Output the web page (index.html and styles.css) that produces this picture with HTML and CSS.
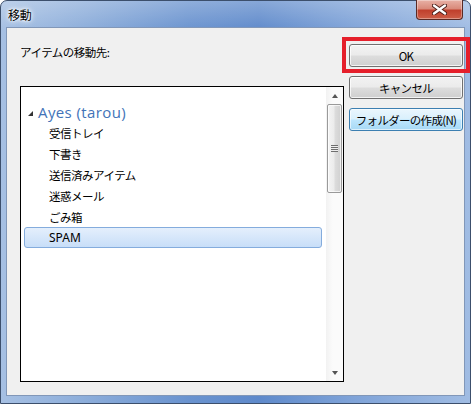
FILE: index.html
```html
<!DOCTYPE html>
<html lang="ja">
<head>
<meta charset="utf-8">
<title>移動</title>
<link rel="stylesheet" href="styles.css">
</head>
<body>
<div class="window">
  <div class="titlebar">
    <span class="title">移動</span>
    <div class="close">
      <svg width="15" height="11" viewBox="0 0 15 11">
        <path d="M2 1.5 L13 9.5 M13 1.5 L2 9.5" stroke="#4a1d17" stroke-width="4.2" stroke-linecap="round"/>
        <path d="M2 1.5 L13 9.5 M13 1.5 L2 9.5" stroke="#ffffff" stroke-width="2.4" stroke-linecap="round"/>
      </svg>
    </div>
  </div>
  <div class="client">
    <div class="main">
      <div class="label">アイテムの移動先:</div>
      <div class="tree">
        <div class="tree-list">
          <div class="row root"><span class="twisty"></span>Ayes (tarou)</div>
          <div class="row child">受信トレイ</div>
          <div class="row child">下書き</div>
          <div class="row child">送信済みアイテム</div>
          <div class="row child">迷惑メール</div>
          <div class="row child">ごみ箱</div>
          <div class="row child selected">SPAM</div>
        </div>
        <div class="scrollbar">
          <div class="arrow"><span class="tri up"></span></div>
          <div class="track">
            <div class="thumb"><span class="grip"></span></div>
          </div>
          <div class="arrow"><span class="tri down"></span></div>
        </div>
      </div>
    </div>
    <div class="side">
      <div class="btn">OK</div>
      <div class="btn">キャンセル</div>
      <div class="btn focus">フォルダーの作成(N)</div>
    </div>
  </div>
  <div class="annot"></div>
</div>
</body>
</html>
```
FILE: styles.css
```css
html, body {
  margin: 0;
  padding: 0;
  background: #ffffff;
}
body {
  width: 471px;
  height: 404px;
  overflow: hidden;
  font-family: "Noto Sans CJK JP", "Noto Sans", sans-serif;
  font-size: 11px;
  color: #000;
}
.window {
  position: relative;
  box-sizing: border-box;
  width: 471px;
  height: 404px;
  border: 1px solid #3c4f6c;
  border-radius: 7px 7px 0 0;
  padding: 0 5px 7px 5px;
  display: flex;
  flex-direction: column;
  background:
    linear-gradient(to bottom, rgba(255,255,255,0.25), rgba(255,255,255,0) 30px),
    linear-gradient(to right, #a6c0e3 0%, #8cadda 18%, #6a93cf 40%, #5f8acb 55%, #7fa3d8 75%, #a0bce3 100%);
}
.titlebar {
  height: 26px;
  display: flex;
  align-items: flex-start;
  flex-shrink: 0;
}
.title {
  margin: 5px 0 0 2px;
  font-size: 12px;
  line-height: 17px;
  letter-spacing: -0.2px;
  text-shadow: 0 0 6px #fff, 0 0 4px #fff, 0 0 2px #fff;
}
.close {
  margin-left: auto;
  margin-right: 2px;
  margin-top: -1px;
  width: 47px;
  height: 20px;
  box-sizing: border-box;
  border: 1px solid #5a2a24;
  border-top: none;
  border-radius: 0 0 4px 4px;
  background: linear-gradient(to bottom, #e8b1a6 0%, #d98a7b 45%, #c0402d 55%, #cd5f48 100%);
  box-shadow: inset 0 0 0 1px rgba(255,255,255,0.35);
  display: flex;
  align-items: center;
  justify-content: center;
}
.client {
  flex: 1;
  display: flex;
  background: #f0f0f0;
  border: 1px solid #8197b8;
}
.main {
  padding: 16px 0 0 13px;
  display: flex;
  flex-direction: column;
}
.label {
  line-height: 16px;
  font-size: 11.5px;
  letter-spacing: -0.5px;
  margin-bottom: 26px;
}
.tree {
  width: 324px;
  height: 296px;
  box-sizing: border-box;
  border: 1px solid #000;
  background: #fff;
  display: flex;
}
.tree-list {
  flex: 1;
  padding-top: 14px;
}
.row {
  box-sizing: border-box;
  height: 21px;
  margin: 0 4px 0 3px;
  border: 1px solid transparent;
  display: flex;
  align-items: center;
  white-space: nowrap;
  font-size: 11.5px;
  letter-spacing: -0.5px;
}
.row.child {
  padding-left: 24px;
}
.row.root {
  padding-left: 3px;
  font-family: "Open Sans", "Noto Sans", sans-serif;
  font-weight: 400;
  font-size: 15px;
  letter-spacing: 0.4px;
  color: #4273b8;
}
.twisty {
  width: 0;
  height: 0;
  border-style: solid;
  border-width: 0 0 5px 5px;
  border-color: transparent transparent #333 transparent;
  margin: 3px 5px 0 0;
}
.row.selected {
  border: 1px solid #84acdd;
  border-radius: 3px;
  background: linear-gradient(to bottom, #e4effc 0%, #c8def8 100%);
  font-family: "Noto Sans", "Noto Sans CJK JP", sans-serif;
  letter-spacing: 0;
  font-size: 12px;
}
.scrollbar {
  width: 17px;
  display: flex;
  flex-direction: column;
  background: linear-gradient(to right, #f2f2f2, #fbfbfb 40%, #fbfbfb);
}
.arrow {
  height: 17px;
  display: flex;
  align-items: center;
  justify-content: center;
  flex-shrink: 0;
}
.tri {
  width: 0;
  height: 0;
  border-style: solid;
}
.tri.up {
  border-width: 0 3.5px 4px 3.5px;
  border-color: transparent transparent #555 transparent;
}
.tri.down {
  border-width: 4px 3.5px 0 3.5px;
  border-color: #555 transparent transparent transparent;
}
.track {
  flex: 1;
}
.thumb {
  box-sizing: border-box;
  width: 15px;
  height: 89px;
  margin-left: 1px;
  border: 1px solid #9a9a9a;
  border-radius: 2px;
  background: linear-gradient(to right, #f4f4f4 0%, #ececec 45%, #dcdcdc 55%, #d0d0d0 100%);
  box-shadow: inset 0 0 0 1px rgba(255,255,255,0.7);
  display: flex;
  align-items: center;
  justify-content: center;
}
.grip {
  width: 7px;
  height: 7px;
  background: repeating-linear-gradient(to bottom, #6e6e6e 0, #6e6e6e 1px, #eeeeee 1px, #eeeeee 2px);
}
.side {
  margin-left: 5px;
  width: 114px;
  padding-top: 16px;
  display: flex;
  flex-direction: column;
  gap: 9px;
}
.btn {
  box-sizing: border-box;
  height: 23px;
  border: 1px solid #707070;
  border-radius: 3px;
  background: linear-gradient(to bottom, #f2f2f2 0%, #ebebeb 49%, #dddddd 51%, #cfcfcf 100%);
  box-shadow: inset 0 0 0 1px rgba(255,255,255,0.75);
  display: flex;
  align-items: center;
  justify-content: center;
  font-size: 11.5px;
  letter-spacing: -0.7px;
}
.btn.focus {
  border-color: #3c7fb1;
  background: linear-gradient(to bottom, #eaf6fd 0%, #d9f0fc 49%, #bee6fd 51%, #a7d9f5 100%);
  box-shadow: inset 0 0 0 1px rgba(255,255,255,0.6);
}
.annot {
  position: absolute;
  left: 341px;
  top: 36px;
  width: 128px;
  height: 36px;
  box-sizing: border-box;
  border: 4px solid #e51f2b;
}
```
